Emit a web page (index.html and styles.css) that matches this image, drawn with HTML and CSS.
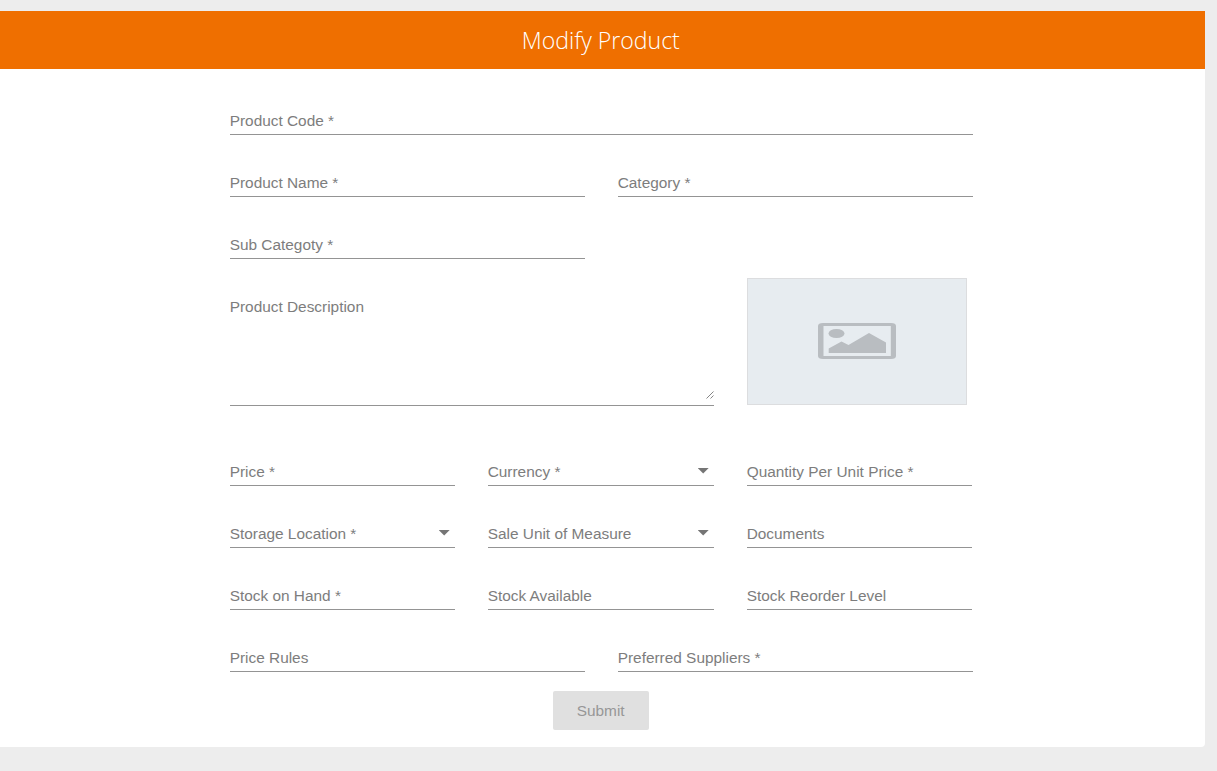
FILE: index.html
```html
<!DOCTYPE html>
<html lang="en">
<head>
<meta charset="utf-8">
<title>Modify Product</title>
<link rel="stylesheet" href="styles.css">
</head>
<body>
<main class="card">
  <header class="card-header"><h1 class="title">Modify Product</h1></header>
  <form class="form">
    <div class="row"><div class="field wide">Product Code *</div></div>
    <div class="row"><div class="field half">Product Name *</div><div class="field half">Category *</div></div>
    <div class="row"><div class="field half">Sub Categoty *</div></div>
    <div class="row tall">
      <div class="field area"><span>Product Description</span>
        <svg class="grip" width="8" height="8" viewBox="0 0 8 8"><path d="M0.5 7.5L7.5 0.5M4.5 7.5L7.5 4.5"/></svg>
      </div>
      <div class="picture">
        <svg width="78" height="36" viewBox="0 0 78 36">
          <path fill-rule="evenodd" d="M5 0H73Q78 0 78 3V33Q78 36 73 36H5Q0 36 0 33V3Q0 0 5 0ZM5.5 3V33H72.8V3Z"/>
          <ellipse cx="18.5" cy="10.5" rx="8" ry="4.5"/>
          <path d="M10.7 30V25.5L23.5 18.5L30.5 22L51 10L68 19.5V30Z"/>
        </svg>
      </div>
    </div>
    <div class="row spaced"><div class="field third">Price *</div><div class="field third mid">Currency *<i class="arrow"></i></div><div class="field third">Quantity Per Unit Price *</div></div>
    <div class="row"><div class="field third">Storage Location *<i class="arrow"></i></div><div class="field third mid">Sale Unit of Measure<i class="arrow"></i></div><div class="field third">Documents</div></div>
    <div class="row"><div class="field third">Stock on Hand *</div><div class="field third mid">Stock Available</div><div class="field third">Stock Reorder Level</div></div>
    <div class="row"><div class="field half">Price Rules</div><div class="field half">Preferred Suppliers *</div></div>
    <button class="submit" type="button" disabled>Submit</button>
  </form>
</main>
</body>
</html>
```
FILE: styles.css
```css
* { box-sizing: border-box; }
body {
  margin: 0;
  padding-top: 11px;
  height: 771px;
  overflow: hidden;
  background: #ededed;
  font-family: "Liberation Sans", Arial, sans-serif;
}
.card {
  width: 1204.6px;
  height: 736px;
  background: #fff;
  border-radius: 0 0 4px 0;
}
.card-header {
  height: 58px;
  display: flex;
  justify-content: center;
  background: #ef6f00;
  padding-right: 3px;
}
.title {
  margin: 0;
  font: 300 23.1px/58px "Open Sans", sans-serif;
  color: #fff;
}
.form {
  width: 743px;
  margin-left: 229.7px;
  padding-top: 4px;
  display: flex;
  flex-direction: column;
}
.row { display: flex; gap: 33px; height: 62px; align-items: flex-end; }
.tall { height: 147px; }
.spaced { height: 80px; }
.field {
  display: flex;
  justify-content: space-between;
  height: 24px;
  border-bottom: 1px solid #949494;
  font-size: 15.4px;
  line-height: 19px;
  color: #7d7d7d;
  white-space: nowrap;
}
.wide { width: 743px; }
.half { width: 355px; }
.third { width: 225px; }
.mid { width: 226px; }
.area { width: 484px; height: 109px; }
.grip {
  align-self: flex-end;
  margin: 0 0 6px;
  fill: none;
  stroke: #777;
  stroke-width: 0.9;
}
.arrow {
  margin: 6px 5px 0 0;
  width: 11px;
  height: 5.5px;
  background: #757575;
  clip-path: polygon(0 0, 100% 0, 50% 100%);
}
.picture {
  width: 220px;
  height: 127px;
  margin-bottom: 1px;
  padding-bottom: 1px;
  display: flex;
  align-items: center;
  justify-content: center;
  background: #e7ecf0;
  border: 1px solid #dcdddf;
  fill: #b9bdc1;
}
.submit {
  width: 96px;
  height: 39px;
  margin: 19px 0 0 323px;
  padding: 0;
  border: 0;
  border-radius: 2px;
  background: #e0e0e0;
  color: #979797;
  font: 15.4px "Liberation Sans", Arial, sans-serif;
}
```
